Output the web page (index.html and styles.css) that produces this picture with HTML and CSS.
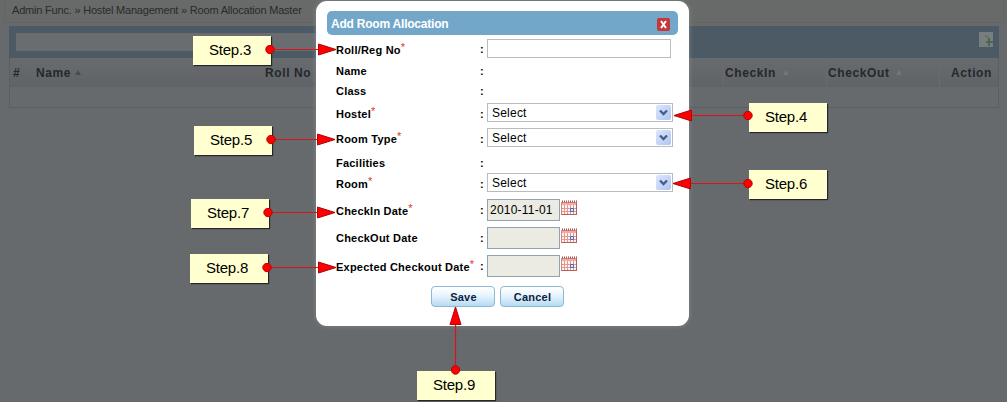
FILE: index.html
```html
<!DOCTYPE html>
<html lang="en">
<head>
<meta charset="utf-8">
<title>Room Allocation Master</title>
<link rel="stylesheet" href="styles.css">
</head>
<body>
<main class="page">
  <nav class="crumbs">Admin Func. » Hostel Management » Room Allocation Master</nav>
  <section class="panel">
    <header class="toolbar">
      <div class="search"></div>
      <svg class="add" width="16" height="16" viewBox="0 0 16 16"><path d="M1 0h14v15H1z" fill="#777e7e"/><path d="M7 4q4 0 4 5" fill="none" stroke="#52665b"/><path d="M11 6v8M8 10h7" stroke="#47684b" stroke-width="2"/></svg>
    </header>
    <div class="thead">
      <span>#</span><span>Name <i class="sort"></i></span><span class="roll">Roll No</span><span class="cell">CheckIn <i class="sort pale"></i></span><span class="cell">CheckOut <i class="sort pale"></i></span><span class="cell action">Action</span>
    </div>
  </section>
</main>

<section class="dialog">
  <header class="title"><h1>Add Room Allocation</h1><button class="close"><svg width="13" height="13" viewBox="0 0 13 13"><path d="M4 3l5 7M9 3l-5 7" stroke="#fff" stroke-width="2"/></svg></button></header>
  <form class="form">
    <label>Roll/Reg No<sup>*</sup></label><b>:</b><div class="field text"></div>
    <label>Name</label><b>:</b><div></div>
    <label>Class</label><b>:</b><div></div>
    <label>Hostel<sup>*</sup></label><b>:</b><div class="field select">Select<span class="drop"><svg width="15" height="15" viewBox="0 0 15 15"><path d="M4 5.5l3.5 3.5L11 5.5" fill="none" stroke="#475e87" stroke-width="2.4"/></svg></span></div>
    <label>Room Type<sup>*</sup></label><b>:</b><div class="field select">Select<span class="drop"><svg width="15" height="15" viewBox="0 0 15 15"><path d="M4 5.5l3.5 3.5L11 5.5" fill="none" stroke="#475e87" stroke-width="2.4"/></svg></span></div>
    <label>Facilities</label><b>:</b><div></div>
    <label>Room<sup>*</sup></label><b>:</b><div class="field select">Select<span class="drop"><svg width="15" height="15" viewBox="0 0 15 15"><path d="M4 5.5l3.5 3.5L11 5.5" fill="none" stroke="#475e87" stroke-width="2.4"/></svg></span></div>
    <label>CheckIn Date<sup>*</sup></label><b>:</b><div class="daterow"><div class="date">2010-11-01</div><svg class="cal" width="17" height="16"><use href="#cal"/></svg></div>
    <label>CheckOut Date</label><b>:</b><div class="daterow"><div class="date"></div><svg class="cal" width="17" height="16"><use href="#cal"/></svg></div>
    <label>Expected Checkout Date<sup>*</sup></label><b>:</b><div class="daterow"><div class="date"></div><svg class="cal" width="17" height="16"><use href="#cal"/></svg></div>
  </form>
  <footer class="buttons"><button class="btn">Save</button><button class="btn">Cancel</button></footer>
</section>

<div class="note n3">Step.3</div>
<div class="note n4">Step.4</div>
<div class="note n5">Step.5</div>
<div class="note n6">Step.6</div>
<div class="note n7">Step.7</div>
<div class="note n8">Step.8</div>
<div class="note n9">Step.9</div>

<svg class="arrows" width="1007" height="402" viewBox="0 0 1007 402">
  <defs>
    <symbol id="cal" viewBox="0 0 17 16">
      <path d="M.5 2.5h15v12H.5z" fill="#fff3ef" stroke="#cf8580"/>
      <path d="M1 3h14v2H1z" fill="#f2aaa6"/>
      <path d="M1 1.5h15" stroke="#b4504d" stroke-width="2" stroke-dasharray="1 1"/>
      <path d="M1 8.5h14M1 11.5h14M3.5 5v9M6.5 5v9M9.5 5v9M12.5 5v9" stroke="#e0988f"/>
      <path d="M9.5 8.500h3v3h-3z" fill="#dfe8ff" stroke="#5268ae"/>
      <path d="M15.500 3v12M0 14.500h16" stroke="#b5605e"/>
    </symbol>
    <marker id="head" viewBox="0 0 20 14" refX="18.500" refY="7" markerWidth="20" markerHeight="14" markerUnits="userSpaceOnUse" orient="auto"><path d="M1 1.500L18.500 7L1 12.500z" fill="#f00" stroke="#a80808"/></marker>
    <marker id="dot" viewBox="0 0 10 10" refX="5" refY="5" markerWidth="10" markerHeight="10" markerUnits="userSpaceOnUse"><circle cx="5" cy="5" r="4.200" fill="#f00" stroke="#b00"/></marker>
  </defs>
  <g class="lines">
    <path d="M270 49.500H336"/>
    <path d="M271 139.500H335"/>
    <path d="M268 212.500H335"/>
    <path d="M267 267.500H336"/>
    <path d="M748 115.500H674"/>
    <path d="M748 183.500H673"/>
    <path d="M455.500 370V307"/>
  </g>
</svg>
</body>
</html>
```
FILE: styles.css
```css
* { box-sizing: border-box; }
body {
  margin: 0;
  height: 402px;
  overflow: hidden;
  background: #666a6d;
  font-family: "Liberation Sans", Arial, sans-serif;
}
.page { padding: 0 12px 0 4px; }
.crumbs {
  height: 23px;
  width: 1000px;
  padding-left: 7px;
  background: #676a68;
  border: solid #66655a;
  border-width: 0 1px 1px;
  color: #272a2c;
  font-size: 11px;
  line-height: 20px;
  letter-spacing: -.2px;
  white-space: nowrap;
}
.panel {
  height: 82px;
  margin: 3px 0 0 5px;
  width: 990px;
  border: 1px solid #5a5f65;
  border-top: 0;
}
.toolbar {
  display: flex;
  align-items: center;
  justify-content: space-between;
  height: 32px;
  margin: 0 -1px;
  padding: 0 5px 0 7px;
  background: #4c5a66;
}
.search { width: 310px; height: 18px; background: #6a6d70; }
.add { position: relative; top: -2px; }
.thead {
  display: grid;
  grid-template-columns: 23px 229px 458px 103px 113px 1fr;
  align-items: center;
  height: 29px;
  padding-left: 3px;
  background: linear-gradient(#686b6e, #5f6367);
  color: #25282b;
  font-size: 12px;
  font-weight: bold;
  letter-spacing: .6px;
}
.thead span { white-space: nowrap; line-height: 29px; height: 27px; }
.thead .cell { padding-left: 1px; border-left: 1px solid #686c70; }
.thead .action { padding-left: 11px; }
.sort {
  display: inline-block;
  margin-bottom: 2px;
  border: solid transparent;
  border-width: 0 3px 5px;
  border-bottom-color: #484c4f;
}
.sort.pale { border-bottom-color: #73777b; margin-left: 3px; }

.dialog {
  position: absolute;
  left: 316px;
  top: 1px;
  width: 373px;
  height: 325px;
  padding: 10px 11px;
  background: #fff;
  border-radius: 11px;
  box-shadow: 0 0 5px #85888a;
}
.title {
  display: flex;
  align-items: center;
  justify-content: space-between;
  height: 24px;
  padding: 0 8px 0 4px;
  border-radius: 5px;
  background: #73a7ca;
}
.title h1 {
  margin: 0;
  padding-top: 1px;
  color: #fff;
  font-size: 12px;
  letter-spacing: -.22px;
}
.close {
  display: flex;
  width: 13px;
  height: 13px;
  margin-top: 2px;
  padding: 0;
  border: 0;
  border-radius: 2px;
  background: #c9363a;
}
.form {
  display: grid;
  grid-template-columns: 144px 7px 1fr;
  grid-template-rows: 22px 21px 20px 25px 25px 23px 19px 34px 22px 34px;
  align-items: center;
  padding: 2px 0 0 9px;
  color: #000;
  font-size: 11px;
  letter-spacing: .22px;
}
.form label { padding-top: 2px; font-weight: bold; white-space: nowrap; }
.form b { padding-top: 2px; }
.form sup {
  display: inline-block;
  height: 8px;
  color: #d33;
  font-size: 11px;
  line-height: 8px;
  font-weight: normal;
  vertical-align: 3px;
}
.field { height: 19px; border: 1px solid #b8bcbd; background: #fff; }
.field.text { width: 184px; }
.field.select {
  display: flex;
  align-items: center;
  justify-content: space-between;
  width: 186px;
  padding: 0 1px 0 4px;
  font-size: 12px;
}
.drop {
  display: flex;
  width: 15px;
  height: 15px;
  border-radius: 2px;
  background: linear-gradient(135deg, #dce7fd, #afc5f2);
}
.daterow { display: flex; gap: 1px; position: relative; top: .5px; }
.date {
  width: 73px;
  height: 22px;
  padding-left: 2px;
  border: 1px solid #8fa3b1;
  background: #ebebe4;
  font-size: 12px;
  line-height: 21px;
  white-space: nowrap;
}
.cal { margin-top: 1px; }
.buttons { display: flex; gap: 5px; padding: 4px 0 0 104px; }
.btn {
  width: 64px;
  height: 21px;
  padding: 0 0 0 1px;
  border: 1px solid #8cb9d4;
  border-radius: 4px;
  background: linear-gradient(#fff 5%, #e3f2fc 50%, #b5daf3);
  color: #0c2340;
  font: bold 11px "Liberation Sans", Arial, sans-serif;
  letter-spacing: .2px;
}
.note {
  position: absolute;
  width: 78px;
  height: 29px;
  background: #ffffcf;
  box-shadow: 1px 1px 1px #24272a;
  color: #000;
  font-size: 15px;
  line-height: 28px;
  letter-spacing: -.2px;
  padding-right: 4px;
  text-align: center;
}
.n3 { left: 193px; top: 36px; }
.n4 { left: 749px; top: 103px; }
.n5 { left: 194px; top: 126px; }
.n6 { left: 749px; top: 170px; }
.n7 { left: 191px; top: 199px; }
.n8 { left: 190px; top: 254px; }
.n9 { left: 417px; top: 371px; }
.arrows { position: absolute; left: 0; top: 0; pointer-events: none; }
.lines path { fill: none; stroke: #dc1418; stroke-width: 1.2; marker-start: url(#dot); marker-end: url(#head); }
```
